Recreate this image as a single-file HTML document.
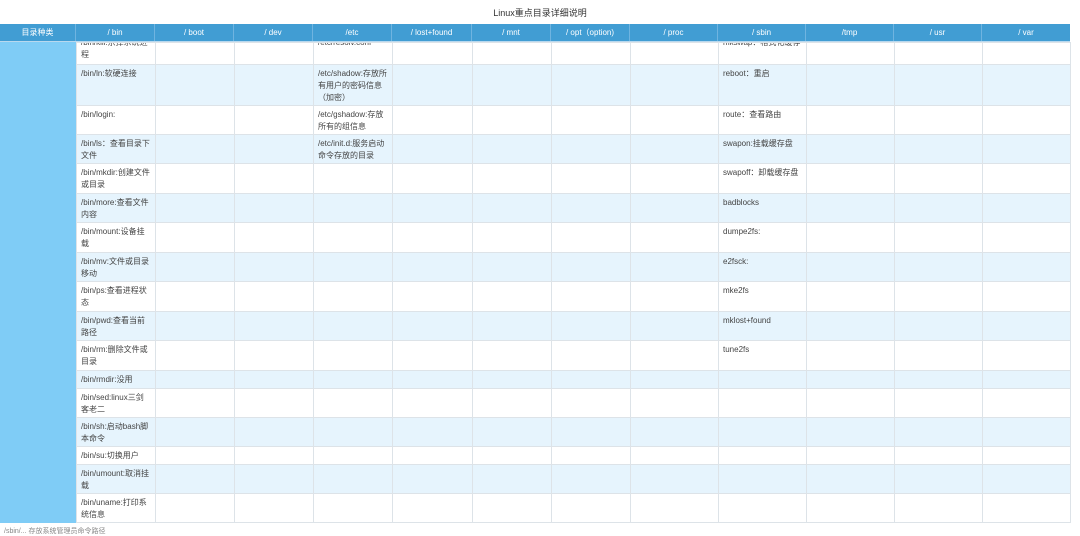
<!DOCTYPE html>
<html><head><meta charset="utf-8"><style>
*{margin:0;padding:0;box-sizing:border-box}
body{width:1080px;height:532px;overflow:hidden;background:#fff;font-family:"Liberation Sans","Noto Sans CJK SC",sans-serif;color:#444;position:relative}
.title{position:absolute;top:6px;left:0;width:1080px;text-align:center;font-size:9px;color:#333}
.hdr{position:absolute;top:24px;left:0;height:18px;width:1070px;background:#419dd3;z-index:2;display:flex;border-bottom:1px solid #b8d8ee}
.hdr div{color:#fff;font-size:8px;text-align:center;line-height:18px;border-right:1px solid #6fb4e0}
.left{position:absolute;top:42px;left:0;width:76px;height:481px;background:#7fccf6}
table{position:absolute;top:42px;left:76px;border-collapse:collapse;table-layout:fixed;width:994px}
td{border:1px solid #dde3e8;font-size:8px;line-height:12px;vertical-align:top;padding:3px 4px 0 4px;overflow:hidden}
tr.b td{background:#e6f4fd}
tr.f td{padding-top:0}
.w{height:21px;overflow:visible}
.w span{position:relative;top:-6px;display:block}
.foot{position:absolute;top:526px;left:4px;font-size:7px;color:#888}
</style></head><body>
<div class="title">Linux重点目录详细说明</div>
<div class="hdr">
<div style="width:76px">目录种类</div><div style="width:79px">/ bin</div><div style="width:79px">/ boot</div><div style="width:79px">/ dev</div><div style="width:79px">/etc</div><div style="width:80px">/ lost+found</div><div style="width:79px">/ mnt</div><div style="width:79px">/ opt（option)</div><div style="width:88px">/ proc</div><div style="width:88px">/ sbin</div><div style="width:88px">/tmp</div><div style="width:88px">/ usr</div><div style="width:88px;border:none">/ var</div>
</div>
<div class="left"></div>
<table>
<colgroup><col style="width:79px"><col style="width:79px"><col style="width:79px"><col style="width:79px"><col style="width:80px"><col style="width:79px"><col style="width:79px"><col style="width:88px"><col style="width:88px"><col style="width:88px"><col style="width:88px"><col style="width:88px"></colgroup>
<tr class="f" style="height:22px"><td><div class="w"><span>/bin/kill:杀掉系统进<br>程</span></div></td><td></td><td></td><td><div class="w"><span>/etc/resolv.conf</span></div></td><td></td><td></td><td></td><td></td><td><div class="w"><span>mkswap：格式化缓存</span></div></td><td></td><td></td><td></td></tr>
<tr class="b" style="height:41px"><td>/bin/ln:软硬连接</td><td></td><td></td><td>/etc/shadow:存放所有用户的密码信息（加密）</td><td></td><td></td><td></td><td></td><td>reboot：重启</td><td></td><td></td><td></td></tr>
<tr style="height:29px"><td>/bin/login:</td><td></td><td></td><td>/etc/gshadow:存放所有的组信息</td><td></td><td></td><td></td><td></td><td>route：查看路由</td><td></td><td></td><td></td></tr>
<tr class="b" style="height:29px"><td>/bin/ls：查看目录下文件</td><td></td><td></td><td>/etc/init.d:服务启动命令存放的目录</td><td></td><td></td><td></td><td></td><td>swapon:挂载缓存盘</td><td></td><td></td><td></td></tr>
<tr style="height:30px"><td>/bin/mkdir:创建文件或目录</td><td></td><td></td><td></td><td></td><td></td><td></td><td></td><td>swapoff：卸载缓存盘</td><td></td><td></td><td></td></tr>
<tr class="b" style="height:29px"><td>/bin/more:查看文件内容</td><td></td><td></td><td></td><td></td><td></td><td></td><td></td><td>badblocks</td><td></td><td></td><td></td></tr>
<tr style="height:30px"><td>/bin/mount:设备挂载</td><td></td><td></td><td></td><td></td><td></td><td></td><td></td><td>dumpe2fs:</td><td></td><td></td><td></td></tr>
<tr class="b" style="height:29px"><td>/bin/mv:文件或目录移动</td><td></td><td></td><td></td><td></td><td></td><td></td><td></td><td>e2fsck:</td><td></td><td></td><td></td></tr>
<tr style="height:30px"><td>/bin/ps:查看进程状态</td><td></td><td></td><td></td><td></td><td></td><td></td><td></td><td>mke2fs</td><td></td><td></td><td></td></tr>
<tr class="b" style="height:29px"><td>/bin/pwd:查看当前路径</td><td></td><td></td><td></td><td></td><td></td><td></td><td></td><td>mklost+found</td><td></td><td></td><td></td></tr>
<tr style="height:30px"><td>/bin/rm:删除文件或目录</td><td></td><td></td><td></td><td></td><td></td><td></td><td></td><td>tune2fs</td><td></td><td></td><td></td></tr>
<tr class="b" style="height:18px"><td>/bin/rmdir:没用</td><td></td><td></td><td></td><td></td><td></td><td></td><td></td><td></td><td></td><td></td><td></td></tr>
<tr style="height:29px"><td>/bin/sed:linux三剑客老二</td><td></td><td></td><td></td><td></td><td></td><td></td><td></td><td></td><td></td><td></td><td></td></tr>
<tr class="b" style="height:29px"><td>/bin/sh:启动bash脚本命令</td><td></td><td></td><td></td><td></td><td></td><td></td><td></td><td></td><td></td><td></td><td></td></tr>
<tr style="height:18px"><td>/bin/su:切换用户</td><td></td><td></td><td></td><td></td><td></td><td></td><td></td><td></td><td></td><td></td><td></td></tr>
<tr class="b" style="height:29px"><td>/bin/umount:取消挂载</td><td></td><td></td><td></td><td></td><td></td><td></td><td></td><td></td><td></td><td></td><td></td></tr>
<tr style="height:29px"><td>/bin/uname:打印系统信息</td><td></td><td></td><td></td><td></td><td></td><td></td><td></td><td></td><td></td><td></td><td></td></tr>
</table>
<div class="foot">/sbin/... 存放系统管理员命令路径</div>
</body></html>
